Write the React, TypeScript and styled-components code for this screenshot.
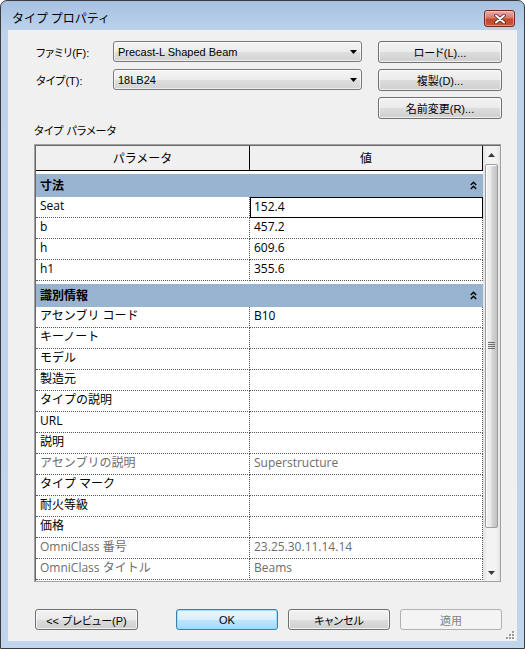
import React from "react";
import styled, { createGlobalStyle, css } from "styled-components";

const GlobalStyle = createGlobalStyle`
  html, body { margin: 0; padding: 0; width: 525px; height: 649px; overflow: hidden; background: #fff; }
  * { box-sizing: border-box; }
`;

const UI_FONT = `"Liberation Sans", "Noto Sans CJK JP", sans-serif`;
const GRID_FONT = `"Open Sans", "Noto Sans CJK JP", sans-serif`;

const Window = styled.div`
  width: 525px;
  height: 649px;
  border: 1px solid #3c3c3c;
  border-radius: 7px 7px 0 0;
  background: linear-gradient(180deg, #a6c1e1 0px, #bcd3eb 30px, #c0d6ed 100%);
  padding: 0 7px 7px;
  display: flex;
  flex-direction: column;
`;

const TitleBar = styled.div`
  height: 29px;
  display: flex;
  align-items: flex-start;
  justify-content: space-between;
  padding: 0 2px 0 4px;
`;

const Title = styled.div`
  font-family: "Noto Sans CJK JP", sans-serif;
  font-size: 12px;
  line-height: 16px;
  padding-top: 9px;
  color: #000;
`;

const CloseBtn = styled.div`
  margin-top: 9px;
  width: 31px;
  height: 17px;
  border: 1px solid #6e2b22;
  border-radius: 3px;
  background: linear-gradient(180deg, #eab0a4 0%, #d97a66 45%, #c5452f 55%, #c8563e 100%);
  box-shadow: inset 0 0 0 1px rgba(255, 220, 210, 0.45);
  display: flex;
  align-items: center;
  justify-content: center;
`;

const Client = styled.div`
  flex: 1;
  position: relative;
  background: #f0f0f0;
  padding: 11px 0 0 26px;
  display: flex;
  flex-direction: column;
`;

const TopGrid = styled.div`
  margin-left: 2px;
  display: grid;
  grid-template-columns: 77px 249px 140px;
  grid-auto-rows: 22px;
  row-gap: 6px;
`;

const FieldLabel = styled.div`
  font-family: ${UI_FONT};
  font-feature-settings: "palt";
  font-size: 11px;
  align-self: center;
  color: #000;
`;

const Combo = styled.div`
  height: 21px;
  border: 1px solid #7a7a7a;
  border-radius: 3px;
  background: linear-gradient(180deg, #f4f4f4 0%, #ececec 50%, #dfdfdf 51%, #d3d3d3 100%);
  box-shadow: inset 0 0 0 1px rgba(255, 255, 255, 0.6);
  display: flex;
  align-items: center;
  justify-content: space-between;
  padding: 0 4px 0 4px;
  font-family: ${UI_FONT};
  font-size: 11px;
  color: #000;
`;

type BtnKind = "normal" | "primary" | "disabled";

const Button = styled.div<{ $w: number; $kind?: BtnKind; $col?: number }>`
  width: ${({ $w }) => $w}px;
  height: ${({ $kind }) => ($kind ? 21 : 22)}px;
  justify-self: end;
  ${({ $col }) => ($col ? `grid-column: ${$col};` : "")}
  border: 1px solid #707070;
  border-radius: 3px;
  background: linear-gradient(180deg, #f2f2f2 0%, #ebebeb 50%, #dddddd 51%, #cfcfcf 100%);
  box-shadow: inset 0 0 0 1px rgba(255, 255, 255, 0.7);
  display: flex;
  align-items: center;
  justify-content: center;
  font-family: ${UI_FONT};
  font-feature-settings: "palt";
  font-size: 11px;
  color: #000;
  ${({ $kind }) =>
    $kind === "primary" &&
    css`
      border-color: #3c7fb1;
      background: linear-gradient(180deg, #eaf6fd 0%, #d9f0fc 50%, #bee6fd 51%, #a7d9f5 100%);
      box-shadow: inset 0 0 0 1px rgba(150, 220, 250, 0.9);
    `}
  ${({ $kind }) =>
    $kind === "disabled" &&
    css`
      border-color: #adb2b5;
      background: #f4f4f4;
      box-shadow: none;
      color: #838383;
    `}
`;

const SectionLabel = styled.div`
  margin-top: 5px;
  font-family: ${UI_FONT};
  font-feature-settings: "palt";
  font-size: 11px;
  line-height: 14px;
  color: #000;
`;

const Table = styled.div`
  margin-top: 6px;
  width: 467px;
  height: 438px;
  border: 1px solid #a0a0a0;
  padding: 1px 0 0 1px;
  box-shadow: inset 1px 1px 0 #696969;
  background: #fff;
  display: flex;
`;

const GridArea = styled.div`
  width: 447px;
  display: flex;
  flex-direction: column;
  font-family: ${GRID_FONT};
  font-size: 12px;
`;

const HeaderRow = styled.div`
  display: grid;
  grid-template-columns: 214px 233px;
  height: 25px;
  background: #f0f0f0;
  border-bottom: 1px solid #000;
`;

const HeaderCell = styled.div`
  border-right: 1px solid #000;
  display: flex;
  align-items: center;
  justify-content: center;
  color: #000;
`;

const GroupRow = styled.div`
  margin-top: 3px;
  height: 23px;
  background: #99b4d1;
  display: flex;
  align-items: center;
  justify-content: space-between;
  padding: 0 6px 1px 4px;
  font-weight: bold;
  color: #000;
`;

const Row = styled.div`
  display: grid;
  grid-template-columns: 214px 233px;
  height: 21px;
`;

const Cell = styled.div<{ $muted?: boolean; $selected?: boolean }>`
  border-right: 1px dotted #555;
  border-bottom: 1px dotted #555;
  padding-left: 4px;
  line-height: 18px;
  white-space: nowrap;
  overflow: hidden;
  color: ${({ $muted }) => ($muted ? "#6d6d6d" : "#000")};
  ${({ $selected }) =>
    $selected &&
    css`
      border: 1px solid #000;
      padding-left: 3px;
      line-height: 17px;
    `}
`;

const ScrollBar = styled.div`
  width: 17px;
  display: flex;
  flex-direction: column;
  background: linear-gradient(90deg, #e2e2e2 0%, #f3f3f3 25%, #f3f3f3 75%, #e6e6e6 100%);
`;

const ScrollArrow = styled.div`
  height: 17px;
  display: flex;
  align-items: center;
  justify-content: center;
`;

const Track = styled.div`
  flex: 1;
  padding: 1px 2px 0 2px;
`;

const Thumb = styled.div`
  height: 364px;
  border: 1px solid #9e9e9e;
  border-radius: 2px;
  background: linear-gradient(90deg, #f4f4f4 0%, #e9e9e9 45%, #d6d6d6 55%, #c2c2c2 100%);
  box-shadow: inset 1px 1px 0 #fff;
  display: flex;
  align-items: center;
  justify-content: center;
`;

const BottomBar = styled.div`
  margin-top: 27px;
  margin-left: 1px;
  width: 467px;
  display: flex;
  justify-content: space-between;
`;

const ButtonGroup = styled.div`
  display: flex;
  gap: 10px;
`;

const Grip = styled.svg`
  position: absolute;
  right: 2px;
  bottom: 1px;
`;

type Param = { name: string; value: string; muted?: boolean; selected?: boolean };

const groups: { title: string; rows: Param[] }[] = [
  {
    title: "寸法",
    rows: [
      { name: "Seat", value: "152.4", selected: true },
      { name: "b", value: "457.2" },
      { name: "h", value: "609.6" },
      { name: "h1", value: "355.6" },
    ],
  },
  {
    title: "識別情報",
    rows: [
      { name: "アセンブリ コード", value: "B10" },
      { name: "キーノート", value: "" },
      { name: "モデル", value: "" },
      { name: "製造元", value: "" },
      { name: "タイプの説明", value: "" },
      { name: "URL", value: "" },
      { name: "説明", value: "" },
      { name: "アセンブリの説明", value: "Superstructure", muted: true },
      { name: "タイプ マーク", value: "" },
      { name: "耐火等級", value: "" },
      { name: "価格", value: "" },
      { name: "OmniClass 番号", value: "23.25.30.11.14.14", muted: true },
      { name: "OmniClass タイトル", value: "Beams", muted: true },
    ],
  },
];

function DownTriangle({ color = "#000" }: { color?: string }) {
  return (
    <svg width="7" height="4" viewBox="0 0 7 4">
      <polygon points="0,0 7,0 3.5,4" fill={color} />
    </svg>
  );
}

function Collapse() {
  return (
    <svg width="7" height="9" viewBox="0 0 7 9">
      <polyline points="0.8,4 3.5,1.2 6.2,4" fill="none" stroke="#000" strokeWidth="1.4" />
      <polyline points="0.8,8 3.5,5.2 6.2,8" fill="none" stroke="#000" strokeWidth="1.4" />
    </svg>
  );
}

export default function App() {
  return (
    <>
      <GlobalStyle />
      <Window>
        <TitleBar>
          <Title>タイプ プロパティ</Title>
          <CloseBtn>
            <svg width="12" height="10" viewBox="0 0 12 10">
              <path d="M2 1.5 L10 8.5 M10 1.5 L2 8.5" stroke="#5a2018" strokeWidth="3.6" strokeLinecap="round" />
              <path d="M2 1.5 L10 8.5 M10 1.5 L2 8.5" stroke="#fff" strokeWidth="2" strokeLinecap="round" />
            </svg>
          </CloseBtn>
        </TitleBar>
        <Client>
          <TopGrid>
            <FieldLabel>ファミリ(F):</FieldLabel>
            <Combo>
              <span>Precast-L Shaped Beam</span>
              <DownTriangle />
            </Combo>
            <Button $w={124}>ロード(L)...</Button>
            <FieldLabel>タイプ(T):</FieldLabel>
            <Combo>
              <span>18LB24</span>
              <DownTriangle />
            </Combo>
            <Button $w={124}>複製(D)...</Button>
            <Button $w={124} $col={3}>名前変更(R)...</Button>
          </TopGrid>

          <SectionLabel>タイプ パラメータ</SectionLabel>

          <Table>
            <GridArea>
              <HeaderRow>
                <HeaderCell>パラメータ</HeaderCell>
                <HeaderCell>値</HeaderCell>
              </HeaderRow>
              {groups.map((g) => (
                <React.Fragment key={g.title}>
                  <GroupRow>
                    <span>{g.title}</span>
                    <Collapse />
                  </GroupRow>
                  {g.rows.map((r) => (
                    <Row key={r.name}>
                      <Cell $muted={r.muted}>{r.name}</Cell>
                      <Cell $muted={r.muted} $selected={r.selected}>
                        {r.value}
                      </Cell>
                    </Row>
                  ))}
                </React.Fragment>
              ))}
            </GridArea>
            <ScrollBar>
              <ScrollArrow>
                <svg width="7" height="4" viewBox="0 0 7 4">
                  <polygon points="0,4 7,4 3.5,0" fill="#3a3a3a" />
                </svg>
              </ScrollArrow>
              <Track>
                <Thumb>
                  <svg width="7" height="8" viewBox="0 0 7 8">
                    {[0, 2, 4, 6].map((y) => (
                      <rect key={y} x="0" y={y} width="7" height="1" fill="#6e6e6e" />
                    ))}
                  </svg>
                </Thumb>
              </Track>
              <ScrollArrow>
                <DownTriangle color="#3a3a3a" />
              </ScrollArrow>
            </ScrollBar>
          </Table>

          <BottomBar>
            <Button $w={103} $kind="normal">&lt;&lt; プレビュー(P)</Button>
            <ButtonGroup>
              <Button $w={102} $kind="primary">OK</Button>
              <Button $w={102} $kind="normal">キャンセル</Button>
              <Button $w={102} $kind="disabled">適用</Button>
            </ButtonGroup>
          </BottomBar>

          <Grip width="9" height="9" viewBox="0 0 9 9">
            {[
              [6, 0],
              [3, 3],
              [6, 3],
              [0, 6],
              [3, 6],
              [6, 6],
            ].map(([x, y]) => (
              <React.Fragment key={`${x}-${y}`}>
                <rect x={x + 1} y={y + 1} width="2" height="2" fill="#fff" />
                <rect x={x} y={y} width="2" height="2" fill="#9a9a9a" />
              </React.Fragment>
            ))}
          </Grip>
        </Client>
      </Window>
    </>
  );
}
